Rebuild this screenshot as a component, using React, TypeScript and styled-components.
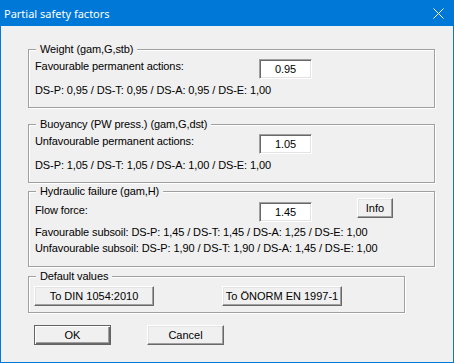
import React from 'react';
import styled, { createGlobalStyle } from 'styled-components';

const GlobalStyle = createGlobalStyle`
  html, body {
    margin: 0;
    padding: 0;
    background: #f0f0f0;
  }
  body {
    font-family: 'Liberation Sans', Arial, sans-serif;
    font-size: 11px;
    color: #000;
  }
`;

const Window = styled.div`
  width: 454px;
  height: 363px;
  box-sizing: border-box;
  border: 1px solid #0078d7;
  background: #f0f0f0;
  display: flex;
  flex-direction: column;
`;

const TitleBar = styled.div`
  height: 25px;
  flex: none;
  background: #0078d7;
  display: flex;
  align-items: center;
  justify-content: space-between;
  padding: 0 9px 0 3px;
`;

const Title = styled.span`
  font-family: 'Noto Sans', 'Open Sans', sans-serif;
  font-size: 11px;
  color: #fff;
`;

const Body = styled.div`
  flex: 1;
  display: flex;
  flex-direction: column;
  align-items: flex-start;
  padding: 23px 0 0 27px;
  letter-spacing: -0.1px;
`;

type GroupProps = { $w: number; $h: number; $mt?: number };
const Group = styled.div<GroupProps>`
  position: relative;
  box-sizing: border-box;
  width: ${p => p.$w}px;
  height: ${p => p.$h}px;
  margin-top: ${p => p.$mt ?? 0}px;
  border: 1px solid #a0a0a0;
  box-shadow: inset 1px 1px 0 #fff, 1px 1px 0 #fff;
  padding: 9px 0 0 6px;
`;

const Legend = styled.span`
  position: absolute;
  top: -7px;
  left: 7px;
  padding: 0 4px;
  line-height: 13px;
  background: #f0f0f0;
  white-space: nowrap;
`;

const FieldRow = styled.div`
  display: grid;
  grid-template-columns: 224px 53px 45px 36px;
  align-items: start;
`;

type LabelProps = { $mt?: number };
const Label = styled.span<LabelProps>`
  line-height: 13px;
  padding-top: ${p => p.$mt ?? 1}px;
  white-space: nowrap;
`;

type InputProps = { $mt?: number };
const Field = styled.div<InputProps>`
  box-sizing: border-box;
  width: 53px;
  height: 20px;
  margin-top: ${p => p.$mt ?? 0}px;
  background: #fff;
  border-top: 1px solid #a0a0a0;
  border-left: 1px solid #a0a0a0;
  border-right: 1px solid #fff;
  border-bottom: 1px solid #fff;
  box-shadow: inset 1px 1px 0 #696969, inset -1px -1px 0 #e3e3e3;
  display: flex;
  align-items: center;
  justify-content: center;
  line-height: 13px;
`;

type TextLineProps = { $mt: number };
const TextLine = styled.div<TextLineProps>`
  line-height: 13px;
  margin-top: ${p => p.$mt}px;
  white-space: nowrap;
`;

type ButtonProps = { $w: number; $default?: boolean };
const Button = styled.div<ButtonProps>`
  box-sizing: border-box;
  width: ${p => p.$w}px;
  height: 20px;
  background: #f0f0f0;
  display: flex;
  align-items: center;
  justify-content: center;
  line-height: 13px;
  letter-spacing: 0;
  ${p =>
    p.$default
      ? `
    border: 1px solid #646464;
    box-shadow: inset 1px 1px 0 #fff, inset -1px -1px 0 #696969, inset -2px -2px 0 #a0a0a0;
  `
      : `
    border-top: 1px solid #fff;
    border-left: 1px solid #fff;
    border-right: 1px solid #696969;
    border-bottom: 1px solid #696969;
    box-shadow: inset -1px -1px 0 #a0a0a0, inset 1px 1px 0 #e3e3e3;
  `}
`;

const ButtonRow = styled.div<{ $gap: number; $mt?: number; $pl?: number }>`
  display: flex;
  gap: ${p => p.$gap}px;
  margin-top: ${p => p.$mt ?? 0}px;
  padding-left: ${p => p.$pl ?? 0}px;
`;

const CloseIcon = () => (
  <svg width="11" height="11" viewBox="0 0 11 11">
    <path d="M0.5 0.5 L10.5 10.5 M10.5 0.5 L0.5 10.5" stroke="#fff" strokeWidth="1" fill="none" />
  </svg>
);

export default function App() {
  return (
    <>
      <GlobalStyle />
      <Window>
        <TitleBar>
          <Title>Partial safety factors</Title>
          <CloseIcon />
        </TitleBar>
        <Body>
          <Group $w={407} $h={59}>
            <Legend>Weight (gam,G,stb)</Legend>
            <FieldRow>
              <Label>Favourable permanent actions:</Label>
              <Field>0.95</Field>
            </FieldRow>
            <TextLine $mt={5}>DS-P: 0,95 / DS-T: 0,95 / DS-A: 0,95 / DS-E: 1,00</TextLine>
          </Group>

          <Group $w={407} $h={59} $mt={16}>
            <Legend>Buoyancy (PW press.) (gam,G,dst)</Legend>
            <FieldRow>
              <Label>Unfavourable permanent actions:</Label>
              <Field>1.05</Field>
            </FieldRow>
            <TextLine $mt={5}>DS-P: 1,05 / DS-T: 1,05 / DS-A: 1,00 / DS-E: 1,00</TextLine>
          </Group>

          <Group $w={407} $h={76} $mt={8} style={{ paddingTop: 6 }}>
            <Legend>Hydraulic failure (gam,H)</Legend>
            <FieldRow>
              <Label $mt={6}>Flow force:</Label>
              <Field $mt={4}>1.45</Field>
              <span />
              <Button $w={36}>Info</Button>
            </FieldRow>
            <TextLine $mt={4}>
              Favourable subsoil: DS-P: 1,45 / DS-T: 1,45 / DS-A: 1,25 / DS-E: 1,00
            </TextLine>
            <TextLine $mt={3}>
              Unfavourable subsoil: DS-P: 1,90 / DS-T: 1,90 / DS-A: 1,45 / DS-E: 1,00
            </TextLine>
          </Group>

          <Group $w={377} $h={37} $mt={9} style={{ paddingLeft: 5 }}>
            <Legend>Default values</Legend>
            <ButtonRow $gap={68}>
              <Button $w={120}>To DIN 1054:2010</Button>
              <Button $w={120}>To ÖNORM EN 1997-1</Button>
            </ButtonRow>
          </Group>

          <ButtonRow $gap={36} $mt={12} $pl={6}>
            <Button $w={77} $default>
              OK
            </Button>
            <Button $w={77}>Cancel</Button>
          </ButtonRow>
        </Body>
      </Window>
    </>
  );
}
